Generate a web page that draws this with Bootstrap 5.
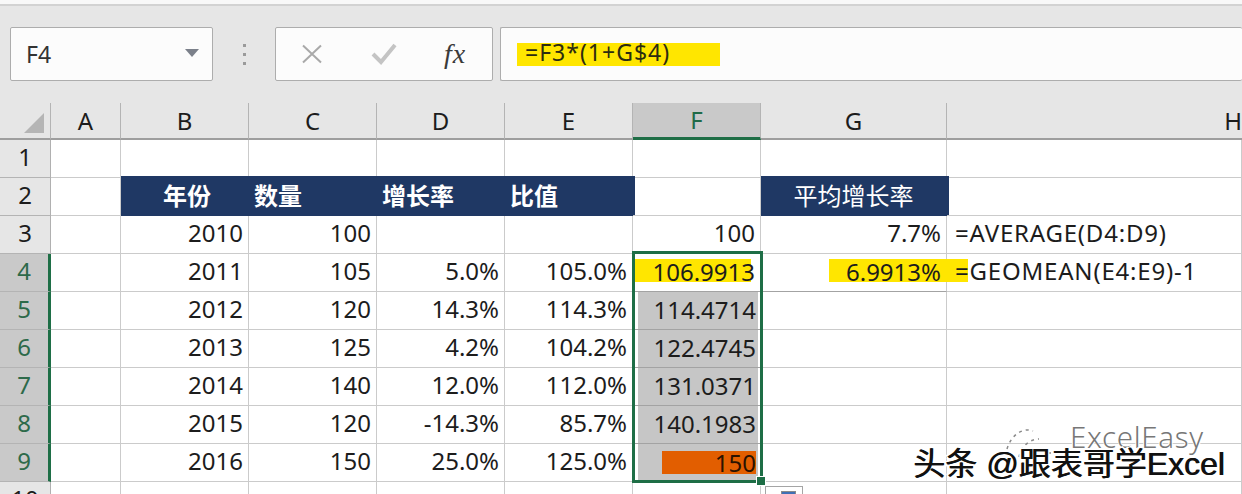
<!DOCTYPE html>
<html lang="zh">
<head>
<meta charset="utf-8">
<title>Excel</title>
<link href="https://cdn.jsdelivr.net/npm/bootstrap@5.3.0/dist/css/bootstrap.min.css" rel="stylesheet">
<style>
html,body{margin:0;background:#fff}
.xl-app{width:1242px;height:494px;font-family:"Noto Sans","Noto Sans CJK SC",sans-serif;color:#1c1c1c;font-size:24px;background:#e6e6e6}
.xl-strip{height:6px;background:#f8f8f8;border-bottom:2px solid #d2d2d2}
.xl-bar{height:97px;padding:21px 0 0 10px}
.xl-box{height:54px;background:#fcfcfc;border:1px solid #adadad;border-radius:2px}
.xl-name{width:203px;padding:0 13px 0 15px;font-size:23px;color:#333}
.xl-tri{width:0;height:0;border-left:7px solid transparent;border-right:7px solid transparent;border-top:8px solid #7b808a;margin-top:-3px}
.xl-dots{width:62px;height:54px;gap:6px}
.xl-dot{width:3px;height:3px;background:#9a9a9a}
.xl-btns{width:218px;margin-right:7px}
.xl-btns svg{display:block}
.xl-btn1{margin-left:25px}
.xl-btn2{margin-left:48px}
.xl-fx{margin-left:47px;font-family:"Liberation Serif",serif;font-style:italic;font-size:28px;color:#3a3a3a;line-height:1;letter-spacing:1px}
.xl-formula{flex:1;border-right:0;padding:0 0 0 16px}
.xl-yellow{background:#ffe600}
.xl-ftext{padding:0 50px 0 8px;height:23px;line-height:19px;font-size:23px;letter-spacing:1px;color:#2c2c10}
.xl-wrap{width:1242px;height:391px}
.xl-sheet{table-layout:fixed;width:1242px;border-collapse:separate;border-spacing:0;background:#fff;line-height:30px}
.xl-sheet td,.xl-sheet th{padding:0 0 3px;height:38px;border-right:1px solid #cbcbcb;border-bottom:1px solid #cbcbcb;font-weight:400;text-align:right;white-space:nowrap;overflow:visible}
.xl-sheet td{padding-right:5px}
.xl-sheet thead th{height:37px;background:#e6e6e6;border-bottom:2px solid #9e9e9e;border-right:1px solid #b4b4b4;text-align:center;line-height:30px;padding:0}
.xl-sheet thead th.xl-cur{background:#c9c9c9;color:#1f6a47;border-bottom:3px solid #1e6e46}
.xl-sheet thead th.xl-last{border-right:0;text-align:right}
.xl-sheet th.xl-row{background:#e6e6e6;border-right:1px solid #b0b0b0;border-bottom:1px solid #b4b4b4;text-align:center}
.xl-sheet th.xl-row-on{background:#c9c9c9;color:#2d6a4a;border-right:3px solid #1e6e46}
.xl-sheet td.xl-head{background:#1f3864;color:#fff;font-weight:700;text-align:left;padding:0 0 2px 5px;border-color:#1f3864;box-shadow:0 -2px 0 #1f3864,2px 0 0 #1f3864,2px -2px 0 #1f3864}
.xl-sheet td.xl-head-c{text-align:center}
.xl-sheet td.xl-head-n{font-weight:400;padding:0 0 2px;text-align:center}
.xl-sheet td.xl-left{text-align:left;padding:0 0 3px 8px;letter-spacing:.8px}
.xl-sheet td.xl-fill{padding:0;border-bottom-color:#a3a3a3}
.xl-gray{height:37px;margin-left:5px;margin-right:2px;background:#c6c6c6;line-height:35px;padding-right:2px}
.xl-orange{margin-left:24px;height:23px;line-height:23px;background:#e25e00;color:#2b1200}
.xl-hl{margin-top:-5px;height:23px;line-height:26px}
.xl-hl-f{margin-left:2px;padding-right:5px;background:linear-gradient(#ffe600,#ffe600) no-repeat;background-size:116px 100%}
.xl-hl-g{margin-left:68px;margin-right:-22px;padding-right:27px;background:#ffe600}
.xl-wm1{left:1070px;top:314px;font-size:29.5px;line-height:40px;color:#777;letter-spacing:.7px;font-weight:300;text-shadow:1px 1px 0 #fff,-1px -1px 0 #fff}
.xl-wm-ic{left:1003px;top:320px}
.xl-wm2{left:913px;top:340px;font-size:32px;line-height:42px;color:#111;white-space:nowrap;font-family:"Liberation Sans","Noto Sans CJK SC",sans-serif;text-shadow:.8px 0 0 #111,2px 2px 0 #fff,-2px -1px 0 #fff,1px -2px 0 #fff,-1px 2px 0 #fff}
.xl-select{left:632px;top:148px;width:131px;height:232px;border:3px solid #1e6e46}
.xl-handle{left:756px;top:373px;width:10px;height:10px;background:#1e6e46;border:1px solid #fff}
.xl-paste{left:765px;top:383px;width:38px;height:14px;background:#fff;border:1px solid #a5a5a5}
.xl-paste-i{left:15px;top:4px;width:15px;height:10px;background:#3f6fb5;border:1px solid #8a8a8a}
.xl-corner{display:block}
</style>
</head>
<body>
<div class="xl-app overflow-hidden">
  <div class="xl-strip"></div>
  <div class="xl-bar d-flex">
    <div class="xl-box xl-name d-flex align-items-center justify-content-between"><span>F4</span><span class="xl-tri"></span></div>
    <div class="xl-dots d-flex flex-column align-items-center justify-content-center"><span class="xl-dot"></span><span class="xl-dot"></span><span class="xl-dot"></span></div>
    <div class="xl-box xl-btns d-flex align-items-center">
      <svg class="xl-btn1" width="22" height="20" viewBox="0 0 22 20" fill="none" stroke="#a9a9a9" stroke-width="2"><path d="M2 1.5 20 18.500M20 1.500 2 18.500"/></svg>
      <svg class="xl-btn2" width="26" height="22" viewBox="0 0 26 22" fill="none" stroke="#c4c4c4" stroke-width="4"><path d="M2 11 10 19 24 2"/></svg>
      <span class="xl-fx">fx</span>
    </div>
    <div class="xl-box xl-formula d-flex align-items-center"><span class="xl-yellow xl-ftext">=F3*(1+G$4)</span></div>
  </div>
  <div class="xl-wrap position-relative overflow-hidden">
    <table class="xl-sheet">
      <colgroup><col style="width:51px"><col style="width:70px"><col style="width:128px"><col style="width:128px"><col style="width:128px"><col style="width:128px"><col style="width:128px"><col style="width:186px"><col></colgroup>
      <thead>
        <tr>
          <th><svg class="xl-corner" width="50" height="34" viewBox="0 0 50 34"><path d="M44 9V29H24Z" fill="#b5b5b5"/></svg></th>
          <th>A</th><th>B</th><th>C</th><th>D</th><th>E</th><th class="xl-cur">F</th><th>G</th><th class="xl-last">H</th>
        </tr>
      </thead>
      <tbody>
        <tr><th class="xl-row">1</th><td></td><td></td><td></td><td></td><td></td><td></td><td></td><td></td></tr>
        <tr><th class="xl-row">2</th><td></td><td class="xl-head xl-head-c">年份</td><td class="xl-head">数量</td><td class="xl-head">增长率</td><td class="xl-head">比值</td><td></td><td class="xl-head xl-head-n">平均增长率</td><td></td></tr>
        <tr><th class="xl-row">3</th><td></td><td>2010</td><td>100</td><td></td><td></td><td>100</td><td>7.7%</td><td class="xl-left">=AVERAGE(D4:D9)</td></tr>
        <tr><th class="xl-row xl-row-on">4</th><td></td><td>2011</td><td>105</td><td>5.0%</td><td>105.0%</td><td class="xl-fill"><div class="xl-hl xl-hl-f">106.9913</div></td><td class="xl-fill xl-plain"><div class="xl-hl xl-hl-g">6.9913%</div></td><td class="xl-left">=GEOMEAN(E4:E9)-1</td></tr>
        <tr><th class="xl-row xl-row-on">5</th><td></td><td>2012</td><td>120</td><td>14.3%</td><td>114.3%</td><td class="xl-fill"><div class="xl-gray">114.4714</div></td><td></td><td></td></tr>
        <tr><th class="xl-row xl-row-on">6</th><td></td><td>2013</td><td>125</td><td>4.2%</td><td>104.2%</td><td class="xl-fill"><div class="xl-gray">122.4745</div></td><td></td><td></td></tr>
        <tr><th class="xl-row xl-row-on">7</th><td></td><td>2014</td><td>140</td><td>12.0%</td><td>112.0%</td><td class="xl-fill"><div class="xl-gray">131.0371</div></td><td></td><td></td></tr>
        <tr><th class="xl-row xl-row-on">8</th><td></td><td>2015</td><td>120</td><td>-14.3%</td><td>85.7%</td><td class="xl-fill"><div class="xl-gray">140.1983</div></td><td></td><td></td></tr>
        <tr><th class="xl-row xl-row-on">9</th><td></td><td>2016</td><td>150</td><td>25.0%</td><td>125.0%</td><td class="xl-fill"><div class="xl-gray d-flex align-items-center"><div class="xl-orange flex-grow-1">150</div></div></td><td></td><td></td></tr>
        <tr><th class="xl-row">10</th><td></td><td></td><td></td><td></td><td></td><td></td><td></td><td></td></tr>
      </tbody>
    </table>
    <div class="xl-select position-absolute"></div>
    <div class="xl-handle position-absolute"></div>
    <div class="xl-paste position-absolute"><div class="xl-paste-i position-absolute"></div></div>
    <svg class="xl-wm-ic position-absolute" width="50" height="42" viewBox="0 0 50 42" fill="none" stroke="#8a8a8a" stroke-width="1.500" stroke-dasharray="3 4"><path d="M4 26C8 12 20 4 30 8M16 34C18 24 26 16 36 16"/><path d="M28 30H48" stroke-dasharray="none"/></svg>
    <div class="xl-wm1 position-absolute">ExcelEasy</div>
    <div class="xl-wm2 position-absolute">头条 @跟表哥学Excel</div>
  </div>
</div>
</body>
</html>
